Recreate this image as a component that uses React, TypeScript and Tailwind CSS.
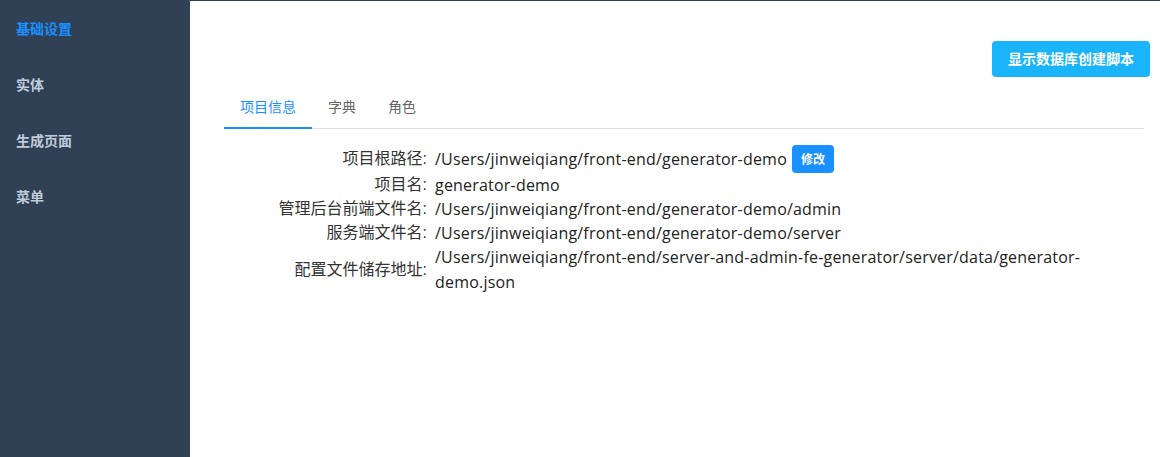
import { useState } from 'react';

const menu = ['基础设置', '实体', '生成页面', '菜单'];
const tabs = ['项目信息', '字典', '角色'];

const rows: { label: string; value: string; edit?: boolean }[] = [
    { label: '项目根路径:', value: '/Users/jinweiqiang/front-end/generator-demo', edit: true },
    { label: '项目名:', value: 'generator-demo' },
    { label: '管理后台前端文件名:', value: '/Users/jinweiqiang/front-end/generator-demo/admin' },
    { label: '服务端文件名:', value: '/Users/jinweiqiang/front-end/generator-demo/server' },
    {
        label: '配置文件储存地址:',
        value: '/Users/jinweiqiang/front-end/server-and-admin-fe-generator/server/data/generator-demo.json',
    },
];

export default function App() {
    const [activeMenu, setActiveMenu] = useState(0);
    const [activeTab, setActiveTab] = useState(0);

    return (
        <div
            className="flex h-screen border-t border-[#304156] bg-white"
            style={{ fontFamily: '"Liberation Sans", "Noto Sans CJK SC", sans-serif' }}
        >
            <aside className="w-[190px] shrink-0 bg-[#304156]">
                {menu.map((m, i) => (
                    <div
                        key={m}
                        onClick={() => setActiveMenu(i)}
                        className={`flex h-14 cursor-pointer items-center pl-4 text-[14px] font-bold ${
                            i === activeMenu ? 'text-[#1890ff]' : 'text-[#bfcbd9]'
                        }`}
                    >
                        {m}
                    </div>
                ))}
            </aside>

            <main className="flex-1 pl-[34px] pr-[10px]">
                <div className="flex justify-end pt-10">
                    <button className="h-9 rounded bg-[#19b4fa] px-4 text-[14px] font-bold text-white">
                        显示数据库创建脚本
                    </button>
                </div>

                <div className="mr-[6px] mt-[11px]">
                    <div className="flex h-[41px] border-b border-[#dcdfe6]">
                        {tabs.map((t, i) => (
                            <div
                                key={t}
                                onClick={() => setActiveTab(i)}
                                className={`-mb-px flex cursor-pointer items-center border-b-2 px-4 text-[14px] ${
                                    i === activeTab
                                        ? 'border-[#1890ff] text-[#1890ff]'
                                        : 'border-transparent text-[#666]'
                                }`}
                            >
                                {t}
                            </div>
                        ))}
                    </div>

                    <div className="mt-4 grid grid-cols-[203px_1fr] gap-x-2 text-[16px] leading-6">
                        {rows.map((r) => (
                            <div key={r.label} className="contents">
                                <div className="flex items-center justify-end text-[#333]">{r.label}</div>
                                <div
                                    className={`flex items-center tracking-[0.2px] text-[#222] ${r.edit ? 'h-7' : ''}`}
                                    style={{ fontFamily: '"Open Sans", "Noto Sans CJK SC", sans-serif' }}
                                >
                                    <span className={r.value.length > 60 ? 'leading-[25px]' : ''}>{r.value}</span>
                                    {r.edit && (
                                        <button
                                            className="ml-[5px] h-7 rounded bg-[#1890ff] px-[9px] text-[12px] font-bold tracking-normal text-white"
                                            style={{ fontFamily: '"Noto Sans CJK SC", sans-serif' }}
                                        >
                                            修改
                                        </button>
                                    )}
                                </div>
                            </div>
                        ))}
                    </div>
                </div>
            </main>
        </div>
    );
}
